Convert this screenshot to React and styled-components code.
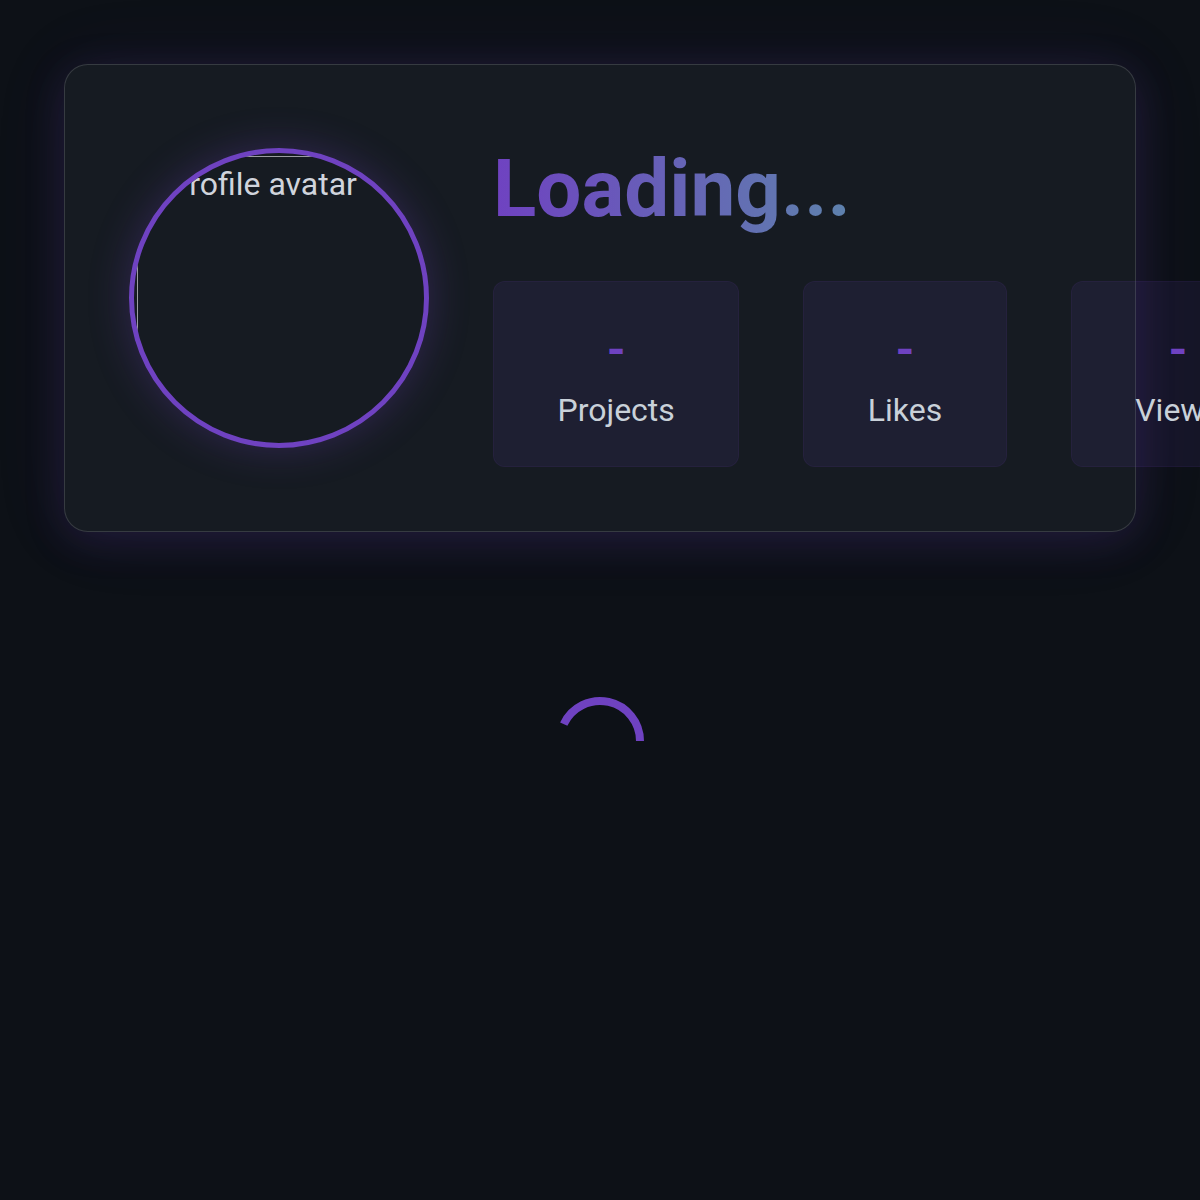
import styled, { createGlobalStyle } from 'styled-components';

const GlobalStyle = createGlobalStyle`
  * {
    box-sizing: border-box;
  }

  body {
    margin: 0;
    background: #0d1117;
    color: #c9d1d9;
    font-family: Roboto, 'Noto Sans', 'Liberation Sans', sans-serif;
    line-height: 1.5;
  }
`;

const Page = styled.main`
  min-height: 1200px;
  padding: 64px;
`;

const ProfileCard = styled.section`
  display: flex;
  align-items: center;
  gap: 64px;
  padding: 64px;
  background: #161b22;
  border: 1px solid rgba(255, 255, 255, 0.14);
  border-radius: 24px;
  box-shadow: 0 8px 40px rgba(111, 66, 193, 0.18),
    0 0 80px rgba(111, 66, 193, 0.08);
`;

const Avatar = styled.div`
  flex-shrink: 0;
  width: 300px;
  height: 300px;
  padding: 3px;
  border: 5px solid #6f42c1;
  border-radius: 50%;
  overflow: hidden;
  box-shadow: 0 0 40px rgba(111, 66, 193, 0.3);
`;

// broken image fallback: alt text with the grey frame, clipped by the circle
const AvatarFallback = styled.div`
  width: 100%;
  height: 100%;
  padding: 3px 0 0 31px;
  border-top: 1px solid rgba(200, 200, 205, 0.75);
  border-left: 1px solid rgba(200, 200, 205, 0.75);
  font-size: 32px;
  white-space: nowrap;
  color: #d0d4dc;
`;

const Info = styled.div`
  flex: 1;
  min-width: 0;
  display: flex;
  flex-direction: column;
`;

const Title = styled.h1`
  align-self: flex-start;
  margin: 0 0 32px;
  font-size: 80px;
  font-weight: 700;
  line-height: 1.5;
  background: linear-gradient(90deg, #6f42c1, #5e82ad);
  -webkit-background-clip: text;
  background-clip: text;
  color: transparent;
`;

const Stats = styled.div`
  display: flex;
  gap: 64px;
`;

const StatBox = styled.div`
  flex-shrink: 0;
  padding: 32px 63.5px;
  text-align: center;
  background: rgba(111, 66, 193, 0.1);
  border: 1px solid rgba(111, 66, 193, 0.08);
  border-radius: 12px;
`;

const StatValue = styled.div`
  font-size: 48px;
  font-weight: 700;
  color: #6f42c1;
`;

const StatLabel = styled.div`
  font-size: 32px;
  color: #c9d1d9;
`;

const LoadingArea = styled.div`
  display: flex;
  justify-content: center;
  margin-top: 164px;
`;

const stats = ['Projects', 'Likes', 'Views'];

function Spinner() {
  return (
    <svg width="90" height="90" viewBox="0 0 90 90">
      <path
        d="M 85 45 A 40 40 0 0 0 8.75 28.1"
        fill="none"
        stroke="#6f42c1"
        strokeWidth="8"
      />
    </svg>
  );
}

export default function App() {
  return (
    <>
      <GlobalStyle />
      <Page>
        <ProfileCard>
          <Avatar>
            <AvatarFallback>Profile avatar</AvatarFallback>
          </Avatar>
          <Info>
            <Title>Loading...</Title>
            <Stats>
              {stats.map((label) => (
                <StatBox key={label}>
                  <StatValue>-</StatValue>
                  <StatLabel>{label}</StatLabel>
                </StatBox>
              ))}
            </Stats>
          </Info>
        </ProfileCard>
        <LoadingArea>
          <Spinner />
        </LoadingArea>
      </Page>
    </>
  );
}
